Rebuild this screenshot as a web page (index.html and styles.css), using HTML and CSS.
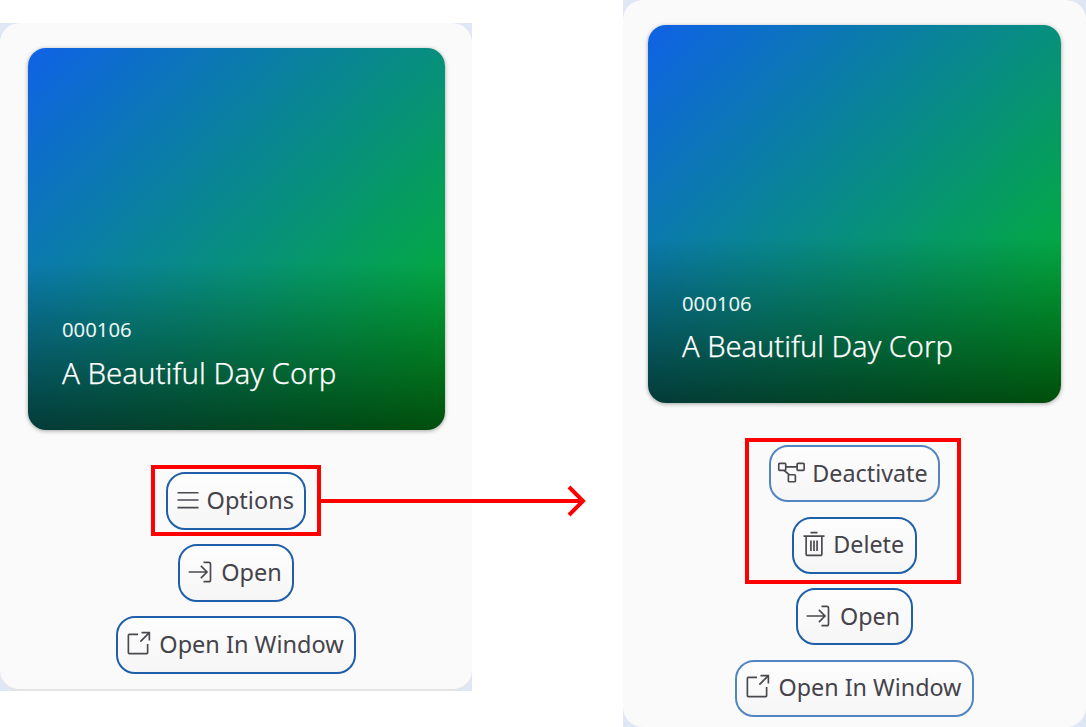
FILE: index.html
```html
<!DOCTYPE html>
<html lang="en">
<head>
  <meta charset="UTF-8">
  <title>Options</title>
  <link rel="stylesheet" href="styles.css">
</head>
<body>

<!-- Before -->
<div class="frame frame-left">
  <div class="panel">
    <div class="hero">
      <div class="hero-num">000106</div>
      <div class="hero-name">A Beautiful Day Corp</div>
    </div>
    <div class="acciones">
      <button class="btn">
        <svg class="ico ico-tight" viewBox="0 0 32 32"><path d="M4 7.700h24M4 16h24M4 24.700h24"/></svg>
        Options
      </button>
      <button class="btn">
        <svg class="ico" viewBox="0 0 32 32"><path d="M3 16h21M17 9l7 7-7 7M20 5h6a2 2 0 0 1 2 2v18a2 2 0 0 1-2 2h-6"/></svg>
        Open
      </button>
      <button class="btn">
        <svg class="ico" viewBox="0 0 32 32"><path d="M16 5H6a1 1 0 0 0-1 1v20a1 1 0 0 0 1 1h20a1 1 0 0 0 1-1V16M20 3h9v9M29 3L18.700 13.300"/></svg>
        Open In Window
      </button>
    </div>
  </div>
</div>

<!-- After -->
<div class="frame frame-right">
  <div class="panel">
    <div class="hero">
      <div class="hero-num">000106</div>
      <div class="hero-name">A Beautiful Day Corp</div>
    </div>
    <div class="acciones">
      <button class="btn btn-soft">
        <svg class="ico" viewBox="0 0 32 32"><rect x="2" y="5" width="8" height="8" rx="1"/><rect x="23" y="5" width="8" height="8" rx="1"/><rect x="13" y="18" width="8" height="8" rx="1"/><path d="M10 9h13M8 13l6 5"/></svg>
        Deactivate
      </button>
      <button class="btn">
        <svg class="ico ico-tight" viewBox="0 0 32 32"><path d="M4 7h24M12 3h8M7 7v20a2 2 0 0 0 2 2h14a2 2 0 0 0 2-2V7M12.500 12v12M16 12v12M19.500 12v12"/></svg>
        Delete
      </button>
      <button class="btn">
        <svg class="ico" viewBox="0 0 32 32"><path d="M3 16h21M17 9l7 7-7 7M20 5h6a2 2 0 0 1 2 2v18a2 2 0 0 1-2 2h-6"/></svg>
        Open
      </button>
      <button class="btn btn-soft">
        <svg class="ico" viewBox="0 0 32 32"><path d="M16 5H6a1 1 0 0 0-1 1v20a1 1 0 0 0 1 1h20a1 1 0 0 0 1-1V16M20 3h9v9M29 3L18.700 13.300"/></svg>
        Open In Window
      </button>
    </div>
  </div>
</div>

<!-- Marcas rojas encima de la captura -->
<div class="marca marca-options"></div>
<div class="marca marca-menu"></div>
<svg class="flecha" viewBox="0 0 266 32"><path d="M0 16h262M248 2l14 14-14 14"/></svg>

</body>
</html>
```

FILE: styles.css
```css
/* Capturas antes / despues */
body {
  margin: 0;
  height: 727px;
  overflow: hidden;
  position: relative;
  display: flex;
  justify-content: space-between;
  align-items: flex-start;
  background-color: #fff;
  font-family: "Noto Sans", sans-serif;
  color: #45434a;
}
.frame {
  background-color: #dfe6f4;
}
.frame-left {
  width: 472px;
  margin-top: 23px;
  --hero-h: 382px;
  --btn-font: 23.5px;
  --btn-h: 58px;
  --btn-gap: 14px;
  --pad-left: 28px;
  --pad-right: 27px;
  --name-font: 29.400px;
  --num-gap: 10px;
  --acciones-shift: 1px;
}
.frame-right {
  width: 463px;
  height: 727px;
  --hero-h: 378px;
  --btn-font: 23.3px;
  --btn-h: 57px;
  --btn-gap: 14.500px;
  --pad-left: 25px;
  --pad-right: 25px;
  --name-font: 29px;
  --num-gap: 9px;
  --acciones-shift: 0;
}
.panel {
  background-color: #fafafa;
  border-radius: 20px;
  box-sizing: border-box;
  height: 100%;
  padding: 25px var(--pad-right) 15px var(--pad-left);
  border-bottom: 2px solid #e4e4e6;
  display: flex;
  flex-direction: column;
  align-items: center;
}
.frame-right .panel {
  border-bottom: none;
  padding-bottom: 0;
}
.hero {
  width: 100%;
  height: var(--hero-h);
  box-sizing: border-box;
  padding: 0 34px 37px;
  border-radius: 18px;
  box-shadow: 0 1px 4px rgba(0, 0, 0, 0.35);
  background-image:
    linear-gradient(to bottom, rgba(0, 0, 0, 0) 56%, rgba(0, 0, 0, 0.58) 100%),
    linear-gradient(135deg, #0f62e6 0%, #00b91c 100%);
  color: #fff;
  display: flex;
  flex-direction: column;
  justify-content: flex-end;
}
.hero-num {
  font-size: 20.300px;
  line-height: 28px;
  margin-bottom: var(--num-gap);
  color: #eaf6f4;
}
.hero-name {
  font-size: var(--name-font);
  font-weight: 300;
  -webkit-text-stroke: 0.25px #fff;
  line-height: 40px;
}
.acciones {
  margin-top: 42px;
  margin-right: var(--acciones-shift);
  display: flex;
  flex-direction: column;
  align-items: center;
  gap: var(--btn-gap);
}
.btn {
  height: var(--btn-h);
  box-sizing: border-box;
  padding: 0 10.500px 2px 6px;
  display: flex;
  align-items: center;
  gap: 7.500px;
  border: 2px solid #1f5fa9;
  border-radius: 19px;
  background-image: linear-gradient(to bottom, #fdfdfd, #f6f6f7);
  font-family: inherit;
  font-size: var(--btn-font);
  color: #45434a;
}
.btn-soft {
  border-color: #5286c0;
}
.ico {
  width: 28px;
  height: 28px;
  flex: none;
  fill: none;
  stroke: #4a484e;
  stroke-width: 1.900;
}
.ico-tight {
  margin-right: -2.500px;
}
.marca {
  position: absolute;
  box-sizing: border-box;
  border: 4px solid #f00;
}
.marca-options {
  left: 151px;
  top: 465px;
  width: 170px;
  height: 71px;
}
.marca-menu {
  left: 745px;
  top: 438px;
  width: 216px;
  height: 146px;
}
.flecha {
  position: absolute;
  left: 321px;
  top: 485px;
  width: 266px;
  height: 32px;
  fill: none;
  stroke: #f00;
  stroke-width: 4;
}
```
